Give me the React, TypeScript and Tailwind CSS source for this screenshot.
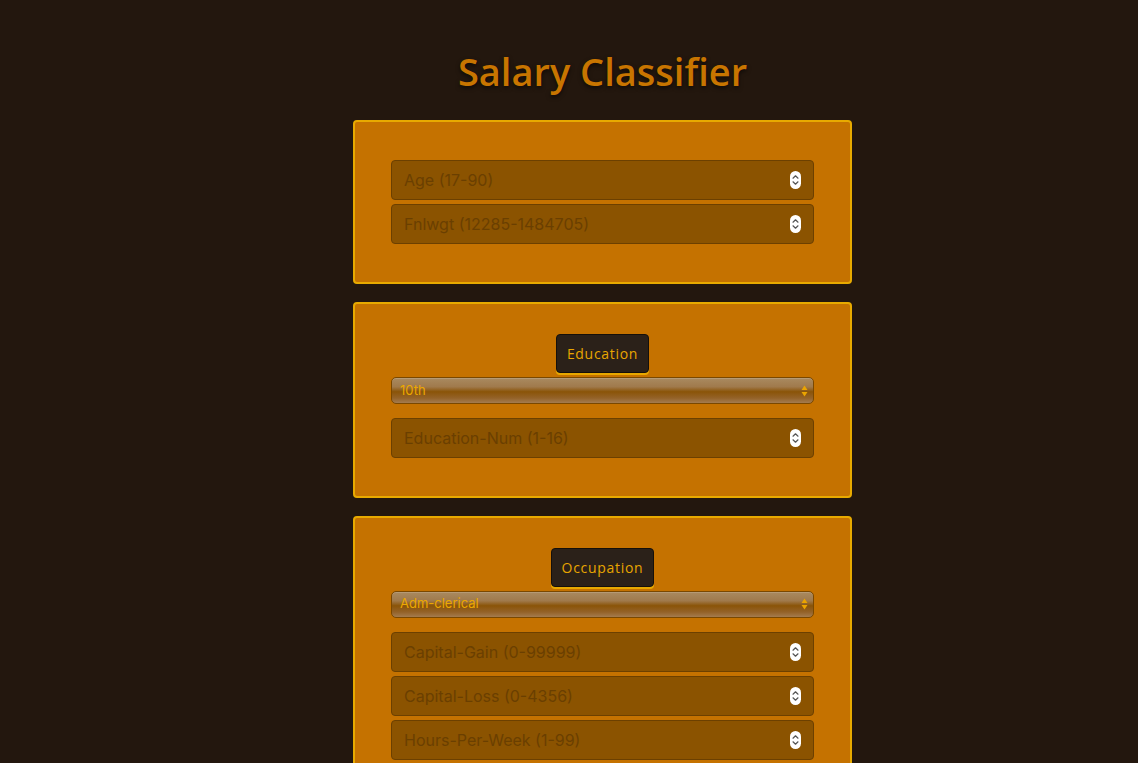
import { ReactNode } from "react";

const educations = ["10th", "11th", "12th", "Bachelors", "Masters", "Doctorate"];
const occupations = ["Adm-clerical", "Craft-repair", "Exec-managerial", "Sales"];

function Spinner() {
  return (
    <span className="pointer-events-none absolute right-[13px] top-1/2 -translate-y-1/2 flex h-[18px] w-[11px] items-center justify-center rounded-full bg-white">
      <svg width="7" height="12" viewBox="0 0 7 12" fill="none" stroke="#555" strokeWidth="1.2" strokeLinecap="round" strokeLinejoin="round">
        <path d="M1 4.2 3.5 1.8 6 4.2" />
        <path d="M1 7.8 3.5 10.2 6 7.8" />
      </svg>
    </span>
  );
}

function NumberField({ placeholder }: { placeholder: string }) {
  return (
    <div className="relative">
      <input
        type="text"
        placeholder={placeholder}
        className="h-10 w-full rounded-[4px] border border-[#6c4000] bg-[#8b5300] px-3 text-[16px] text-[#3a2200] placeholder:text-[#6a3f00] outline-none"
        style={{ fontFamily: "Inter, 'Noto Sans', sans-serif" }}
      />
      <Spinner />
    </div>
  );
}

function SelectField({ options }: { options: string[] }) {
  return (
    <div className="relative">
      <select
        className="h-[27px] w-full appearance-none rounded-[5px] border border-[#7a4800] bg-[linear-gradient(to_bottom,#a98a60_0%,#a07a4c_35%,#8a5408_55%,#946228_80%,#a47c50_100%)] pl-2 text-[13px] text-[#eca800] outline-none shadow-[inset_0_1px_0_rgba(255,255,255,0.15)]"
        style={{ fontFamily: "Inter, 'Noto Sans', sans-serif" }}
      >
        {options.map((o) => (
          <option key={o}>{o}</option>
        ))}
      </select>
      <svg
        className="pointer-events-none absolute right-[6px] top-1/2 -translate-y-1/2"
        width="7"
        height="12"
        viewBox="0 0 7 12"
        fill="#eaa400"
      >
        <path d="M3.5 0.5 6.5 5H0.5Z" />
        <path d="M3.5 11.5 6.5 7H0.5Z" />
      </svg>
    </div>
  );
}

function Label({ children }: { children: ReactNode }) {
  return (
    <div className="flex justify-center">
      <span
        className="rounded-[4px] border border-[#15100a] bg-[#2b2119] px-[10px] py-[9px] text-[14px] font-medium leading-[19px] tracking-[0.7px] text-[#e8a600] shadow-[0_2px_0_#e8a800]"
        style={{ fontFamily: "'Open Sans', 'Noto Sans', sans-serif" }}
      >
        {children}
      </span>
    </div>
  );
}

function Card({ children, top }: { children: ReactNode; top: string }) {
  return (
    <div className={`rounded-[4px] border-2 border-[#e8aa00] bg-[#c57200] px-9 pb-[38px] ${top}`}>
      {children}
    </div>
  );
}

export default function App() {
  return (
    <div className="min-h-screen bg-[#23170e] pl-[67px] pt-[46px] pb-10">
      <div className="mx-auto flex w-[499px] flex-col items-stretch">
        <h1
          className="mb-[24px] text-center text-[38px] font-semibold leading-[50px] text-[#c87500] [text-shadow:0_2px_4px_rgba(0,0,0,0.6)]"
          style={{ fontFamily: "'Open Sans', 'Noto Sans', sans-serif" }}
        >
          Salary Classifier
        </h1>
        <div className="flex flex-col gap-[18px]">
          <Card top="pt-[38px]">
            <div className="flex flex-col gap-1">
              <NumberField placeholder="Age (17-90)" />
              <NumberField placeholder="Fnlwgt (12285-1484705)" />
            </div>
          </Card>
          <Card top="pt-[30px]">
            <Label>Education</Label>
            <div className="mt-[4px]">
              <SelectField options={educations} />
            </div>
            <div className="mt-[14px]">
              <NumberField placeholder="Education-Num (1-16)" />
            </div>
          </Card>
          <Card top="pt-[30px]">
            <Label>Occupation</Label>
            <div className="mt-[3px]">
              <SelectField options={occupations} />
            </div>
            <div className="mt-[14px] flex flex-col gap-1">
              <NumberField placeholder="Capital-Gain (0-99999)" />
              <NumberField placeholder="Capital-Loss (0-4356)" />
              <NumberField placeholder="Hours-Per-Week (1-99)" />
            </div>
          </Card>
        </div>
      </div>
    </div>
  );
}
